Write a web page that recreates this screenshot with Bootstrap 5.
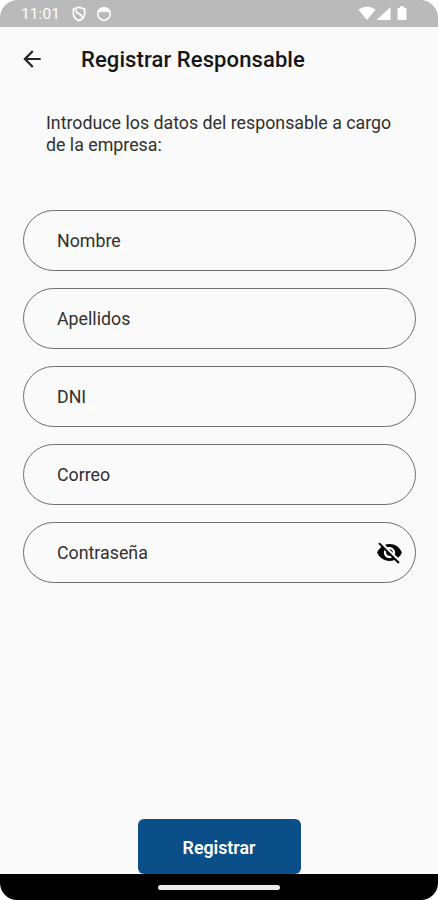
<!DOCTYPE html>
<html lang="es">
<head>
<meta charset="utf-8">
<meta name="viewport" content="width=device-width, initial-scale=1">
<title>Registrar Responsable</title>
<link href="https://cdn.jsdelivr.net/npm/bootstrap@5.3.0/dist/css/bootstrap.min.css" rel="stylesheet">
<style>
  body { background: #fff; font-family: Roboto, sans-serif; color: #1c1c1c; }
  svg { display: block; flex: none; }
  .phone { width: 438px; height: 900px; background: #fafafa; border-radius: 18px 18px 17px 17px; }
  .status { height: 27px; background: #bababa; color: #fff; padding: 1px 29px 0 21px; }
  .clock { font-size: 15.5px; line-height: 24px; width: 51px; letter-spacing: .1px; }
  .app-bar { height: 64px; padding-left: 19px; }
  .app-title { font-size: 22px; line-height: 28px; font-weight: 500; margin: 0 0 0 36px; padding-top: 1px; color: #161616; letter-spacing: .1px; }
  .intro { font-size: 17.8px; line-height: 22px; margin: 21px 40px 0 46px; letter-spacing: 0; color: #303030; }
  .fields { margin: 54px 22px 0 23px; gap: 17px; }
  .field { height: 61.400px; margin-bottom: -.4px; border: 1px solid #6e6e6e; padding: 0 12px 0 33px; font-size: 17.8px; color: #303030; }
  .field span { padding-top: 2px; }
  .submit { width: 163px; height: 55px; background: #0a4f88; color: #fff; font-size: 17.8px; font-weight: 600; border-radius: 6px; }
  .submit:hover { background: #0a4f88; color: #fff; }
  .system-bar { height: 26px; background: #000; }
  .home-pill { width: 122px; height: 5px; background: #ececec; }
</style>
<script src="https://cdn.jsdelivr.net/npm/bootstrap@5.3.0/dist/js/bootstrap.bundle.min.js"></script>
</head>
<body>
<div class="phone d-flex flex-column overflow-hidden">
  <div class="status d-flex align-items-center">
    <span class="clock">11:01</span>
    <svg width="14" height="16" viewBox="0 0 14 16" fill="none" stroke="#fff" stroke-width="1.7"><path d="M7 1.200 12.600 3v4.500c0 3.300-2.300 5.900-5.600 7.100-3.300-1.200-5.600-3.800-5.600-7.100V3z"/><path d="M3.300 3.300 5 6.600l4.300 2.600.8 2.600"/></svg>
    <svg class="ms-2" width="20" height="16" viewBox="0 0 20 16"><circle cx="10" cy="8" r="6.200" fill="none" stroke="#fff" stroke-width="1.500"/><path d="M3.500 5.300 6.200 6.600 8.200 5.200 10 6.400 12 5.200 14 6.500 16.500 5.300C15.200 2.500 12.800 1.200 10 1.200S4.800 2.500 3.500 5.300z" fill="#fff"/></svg>
    <svg class="ms-auto" width="52" height="16" viewBox="-1.500 .5 52 16" fill="#fff"><path d="M0 4.200C4.800.3 12.200.3 17 4.200L8.500 14.500z"/><path d="M18 14.500 32 1.500v13z"/><path d="M40 2.500h1.500V.8h4v1.700H47q1 0 1 1v10q0 1-1 1h-7q-1 0-1-1v-10q0-1 1-1z"/></svg>
  </div>
  <header class="app-bar d-flex align-items-center">
    <svg width="26" height="26" viewBox="0 0 24 24" fill="#252525"><path d="M20 11H7.830l5.590-5.590L12 4l-8 8 8 8 1.410-1.410L7.830 13H20v-2z"/></svg>
    <h1 class="app-title">Registrar Responsable</h1>
  </header>
  <p class="intro">Introduce los datos del responsable a cargo<br>de la empresa:</p>
  <div class="fields d-flex flex-column">
    <div class="field rounded-pill d-flex align-items-center"><span>Nombre</span></div>
    <div class="field rounded-pill d-flex align-items-center"><span>Apellidos</span></div>
    <div class="field rounded-pill d-flex align-items-center"><span>DNI</span></div>
    <div class="field rounded-pill d-flex align-items-center"><span>Correo</span></div>
    <div class="field rounded-pill d-flex align-items-center justify-content-between"><span>Contraseña</span>
      <svg width="27" height="27" viewBox="0 0 24 24" fill="#000"><path d="M12 7c2.760 0 5 2.240 5 5 0 .65-.13 1.260-.36 1.830l2.920 2.920c1.510-1.260 2.700-2.890 3.430-4.750-1.730-4.390-6-7.500-11-7.500-1.400 0-2.740.25-3.980.7l2.160 2.160C10.740 7.130 11.350 7 12 7zM2 4.270l2.280 2.280.46.46C3.080 8.300 1.780 10.020 1 12c1.730 4.390 6 7.500 11 7.500 1.550 0 3.030-.3 4.380-.84l.42.42L19.730 22 21 20.730 3.270 3 2 4.270zM7.530 9.800l1.550 1.550c-.05.21-.08.43-.08.65 0 1.660 1.340 3 3 3 .22 0 .44-.03.65-.08l1.550 1.550c-.67.33-1.410.53-2.200.53-2.760 0-5-2.240-5-5 0-.79.2-1.530.53-2.200zm4.310-.78 3.150 3.150.02-.16c0-1.660-1.340-3-3-3l-.17.01z"/></svg>
    </div>
  </div>
  <button type="button" class="submit btn border-0 p-0 pt-1 mt-auto mx-auto">Registrar</button>
  <div class="system-bar d-flex justify-content-center align-items-center"><div class="home-pill rounded-pill"></div></div>
</div>
</body>
</html>
